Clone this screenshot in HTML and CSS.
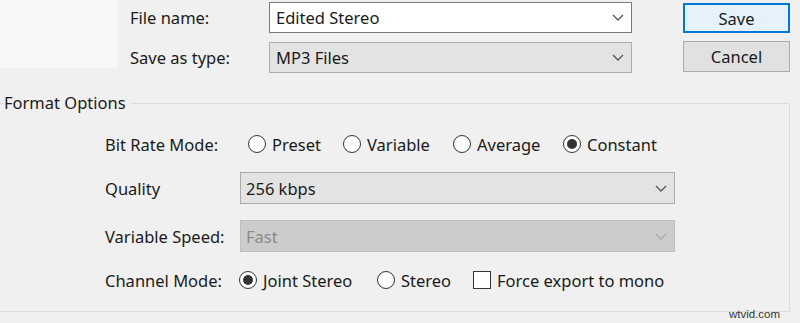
FILE: index.html
```html
<!DOCTYPE html>
<html lang="en">
<head>
    <meta charset="UTF-8">
    <title>Export Audio</title>
    <link rel="stylesheet" href="styles.css">
</head>
<body>
    <div class="top">
        <div class="places"></div>

        <div class="file-fields">
            <label class="field-label">File name:</label>
            <div class="combo edit">
                <span>Edited Stereo</span>
                <svg class="chevron" viewBox="0 0 12 7"><polyline points="1,1 6,6 11,1"/></svg>
            </div>

            <label class="field-label">Save as type:</label>
            <div class="combo">
                <span>MP3 Files</span>
                <svg class="chevron" viewBox="0 0 12 7"><polyline points="1,1 6,6 11,1"/></svg>
            </div>
        </div>

        <div class="buttons">
            <button class="btn default">Save</button>
            <button class="btn">Cancel</button>
        </div>
    </div>

    <fieldset class="format">
        <legend>Format Options</legend>
        <div class="options">
            <span class="opt-label">Bit Rate Mode:</span>
            <div class="choices bitrate">
                <span class="choice w95"><span class="radio"></span>Preset</span>
                <span class="choice w110"><span class="radio"></span>Variable</span>
                <span class="choice w110"><span class="radio"></span>Average</span>
                <span class="choice"><span class="radio on"></span>Constant</span>
            </div>

            <span class="opt-label">Quality</span>
            <div class="select">
                <span>256 kbps</span>
                <svg class="chevron" viewBox="0 0 12 7"><polyline points="1,1 6,6 11,1"/></svg>
            </div>

            <span class="opt-label">Variable Speed:</span>
            <div class="select disabled">
                <span>Fast</span>
                <svg class="chevron" viewBox="0 0 12 7"><polyline points="1,1 6,6 11,1"/></svg>
            </div>

            <span class="opt-label">Channel Mode:</span>
            <div class="choices channel">
                <span class="choice w138"><span class="radio on"></span>Joint Stereo</span>
                <span class="choice w96"><span class="radio"></span>Stereo</span>
                <span class="choice"><span class="check"></span>Force export to mono</span>
            </div>
        </div>
    </fieldset>

    <div class="watermark">wtvid.com</div>
</body>
</html>
```

FILE: styles.css
```css
* {
    margin: 0;
    padding: 0;
    box-sizing: border-box;
}

body {
    width: 800px;
    height: 323px;
    overflow: hidden;
    position: relative;
    background: #f0f0f0;
    font-family: 'Segoe UI', 'Noto Sans', sans-serif;
    font-size: 16.5px;
    color: #1a1a1a;
}

/* file name / type area */
.top {
    display: flex;
    align-items: flex-start;
}

.places {
    width: 118px;
    height: 68px;
    background: #f7f7f7;
}

.file-fields {
    display: grid;
    grid-template-columns: 139px 363px;
    grid-auto-rows: 31px;
    row-gap: 9px;
    align-items: center;
    margin: 2px 0 0 12px;
}

.combo,
.select {
    height: 100%;
    display: flex;
    align-items: center;
    justify-content: space-between;
    padding: 0 7px 0 6px;
    border: 1px solid #adadad;
    background: #e3e3e3;
}

.combo.edit {
    background: #fff;
    border-color: #7a7a7a;
}

.chevron {
    width: 12px;
    height: 7px;
    fill: none;
    stroke: #555;
    stroke-width: 1.3;
}

.buttons {
    display: flex;
    flex-direction: column;
    gap: 8px;
    width: 107px;
    margin: 3px 0 0 51px;
}

.btn {
    height: 31px;
    font: inherit;
    color: inherit;
    background: #e1e1e1;
    border: 1px solid #adadad;
}

.btn.default {
    height: 30px;
    background: #e5f1fb;
    border: 2px solid #0078d7;
}

/* format options group */
.format {
    margin: 19px 10px 0 0;
    border: 1px solid #dcdcdc;
    border-left: none;
    padding: 0;
}

.format legend {
    margin-left: 4px;
    padding-right: 5px;
    line-height: 22px;
}

.options {
    display: grid;
    grid-template-columns: 135px 435px;
    grid-template-rows: 24px 32px 32px 24px;
    row-gap: 16px;
    align-items: center;
    padding: 18px 0 19px 105px;
}

.select {
    padding-left: 5px;
}

.select.disabled {
    background: #cccccc;
    border-color: #bfbfbf;
    color: #8a8a8a;
}

.select.disabled .chevron {
    stroke: #a8a8a8;
}

.choices {
    display: flex;
    align-items: center;
}

.choices.bitrate {
    padding-left: 8px;
}

.choices.channel {
    margin-left: -1px;
}

.choice {
    display: flex;
    align-items: center;
    gap: 6px;
}

.w95 { width: 95px; }
.w96 { width: 96px; }
.w110 { width: 110px; }
.w138 { width: 138px; }

.radio {
    width: 18px;
    height: 18px;
    border: 1px solid #333;
    border-radius: 50%;
    background: #fff;
    display: flex;
    align-items: center;
    justify-content: center;
}

.radio.on::after {
    content: '';
    width: 10px;
    height: 10px;
    border-radius: 50%;
    background: #333;
}

.check {
    width: 18px;
    height: 18px;
    border: 1px solid #333;
    background: #fff;
}

.watermark {
    position: absolute;
    right: 20px;
    bottom: 3px;
    font-family: 'Liberation Sans', sans-serif;
    font-size: 11.5px;
    color: #333;
}
```
